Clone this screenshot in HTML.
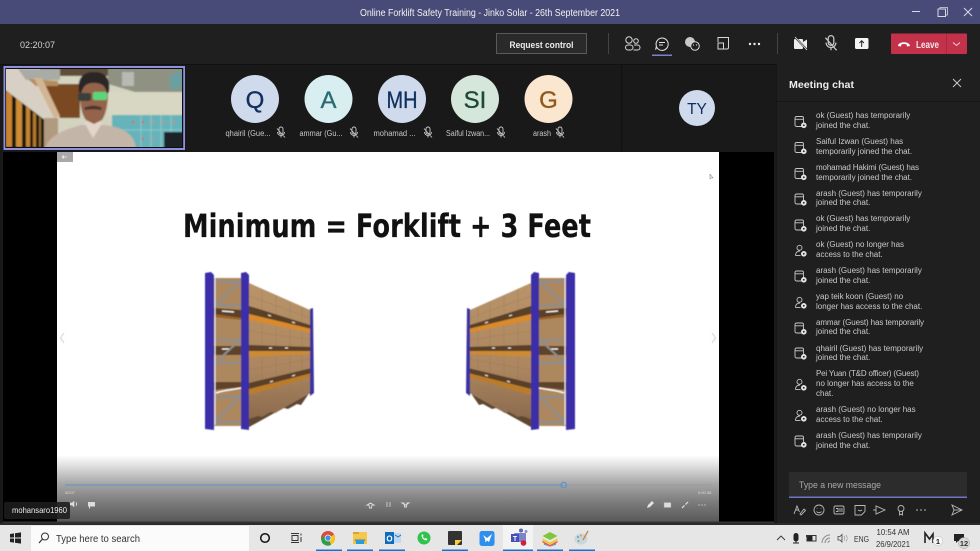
<!DOCTYPE html>
<html><head><meta charset="utf-8"><title>Online Forklift Safety Training</title>
<style>
html,body{margin:0;padding:0;background:#1f1f1f;width:980px;height:551px;overflow:hidden}
svg{display:block}
text{font-family:"Liberation Sans",sans-serif}
.c{font-size:8px;fill:#cacaca}
.n{font-size:8px;fill:#c8c8c8;text-anchor:middle}
.i{font-size:24px;text-anchor:middle;stroke-width:.35}
</style></head><body>
<svg xmlns="http://www.w3.org/2000/svg" width="980" height="551" viewBox="0 0 980 551">
<defs>
<filter id="b1" x="-5%" y="-5%" width="110%" height="110%"><feGaussianBlur stdDeviation="0.6"/></filter>
<filter id="b2" x="-5%" y="-5%" width="110%" height="110%"><feGaussianBlur stdDeviation="0.8"/></filter>
<linearGradient id="fade" x1="0" y1="0" x2="0" y2="1"><stop offset="0" stop-color="#fff"/><stop offset=".15" stop-color="#e2e2e2"/><stop offset=".42" stop-color="#a8a8a8"/><stop offset=".67" stop-color="#808080"/><stop offset="1" stop-color="#585858"/></linearGradient>
<linearGradient id="box" x1="0" y1="0" x2="0" y2="1"><stop offset="0" stop-color="#b99469"/><stop offset=".6" stop-color="#ab8660"/><stop offset="1" stop-color="#86654a"/></linearGradient>
<g id="mic"><path d="M-2 -4a2 2 0 0 1 4 0v3a2 2 0 0 1-4 0zM-3.500 -1a3.500 3.500 0 0 0 7 0M0 2.500v2M-4 -4.500L4 4.500" fill="none" stroke="#c8c8c8" stroke-width=".9"/></g>
<g id="j"><rect x="0" y="0" width="8.500" height="10" rx="1.500" fill="none" stroke="#c8c8c8" stroke-width=".9"/><path d="M0 2.800h8.500" stroke="#c8c8c8" stroke-width=".9"/><circle cx="8.800" cy="8.800" r="2.800" fill="#e4e4e4"/><circle cx="8.800" cy="8.800" r=".9" fill="#1f1f1f"/></g>
<g id="p"><circle cx="4.500" cy="2.800" r="2.500" fill="none" stroke="#c8c8c8" stroke-width=".9"/><path d="M.5 10.500c0-3 2-4.500 4.500-4.500" fill="none" stroke="#c8c8c8" stroke-width=".9"/><path d="M.5 10.500h5" stroke="#c8c8c8" stroke-width=".9"/><circle cx="8.800" cy="8.800" r="2.800" fill="#e4e4e4"/><circle cx="8.800" cy="8.800" r=".9" fill="#1f1f1f"/></g>
<g id="rack" filter="url(#b1)">
<!-- front bay -->
<polygon points="214,278 241,278 241,426 214,426" fill="#ad885e"/>
<polygon points="214,308 241,310 241,318 214,314" fill="#5a3f28"/>
<polygon points="214,346 241,346 241,355 214,355" fill="#5f4229"/>
<polygon points="214,382 241,382 241,387 214,390" fill="#5f4229"/>
<polygon points="214,314 241,318 241,320 214,317" fill="#9a6428"/>
<path d="M222 311l12 1M222 349h8M216 393c8-3 16-3 25-5" stroke="#fff" stroke-width="1.300" fill="none"/>
<!-- side face -->
<polygon points="249,283 310,310 312,392 249,427" fill="url(#box)"/>
<path d="M262 289v131M276 295v118M290 302v100M302 307v88" stroke="#967451" stroke-width=".6" opacity=".55"/>
<path d="M249 296l61 22M249 331l62 9M249 370l62-11M249 408l62-26" stroke="#967451" stroke-width=".6" opacity=".55"/>
<!-- pallet strips -->
<polygon points="249,306 310,325 310,329 249,314" fill="#5a3f28"/>
<polygon points="249,345 312,347 312,351 249,351" fill="#5a3f28"/>
<polygon points="249,383 312,368 312,373 249,389" fill="#5a3f28"/>
<path d="M268 315l3 1M292 322l3 1M269 348h3M285 348h3M270 382l3-1M292 376l3-1" stroke="#f2efe8" stroke-width="1"/>
<!-- orange beams -->
<polygon points="249,314 312,329 312,333 249,320" fill="#d98a2c"/>
<polygon points="249,351 312,351 312,354 249,357" fill="#cc8a34"/>
<polygon points="249,389 312,373 312,377 249,395" fill="#bb7c2c"/>
<!-- bottom pallet -->
<polygon points="249,419 258,416 262,417 271,412 275,413 284,408 288,409 297,404 301,405 312,389 312,392 249,427" fill="#5f4630"/>
<!-- bracing -->
<path d="M215 282h26M215 305h26M215 340h26M215 363h26M215 397h26M215 422h26M240 282l-25 23M240 340l-25 23M240 397l-25 25" stroke="#8a8e90" stroke-width="2" fill="none"/>
<path d="M215 275v150" stroke="#eee" stroke-width="1"/>
<!-- posts -->
<polygon points="205,273 211,272 214,275 214,430 205,429" fill="#3b2fa8"/>
<polygon points="241,273 246,272 249,275 249,430 241,429" fill="#3a2ea6"/>
<polygon points="310,309 313,308 314,393 310,396" fill="#3b30a0"/>
</g>
</defs>

<!-- base -->
<rect width="980" height="551" fill="#1f1f1f"/>
<rect width="980" height="24" fill="#484a78"/>
<text x="490" y="16" font-size="9.800" fill="#f2f2f2" text-anchor="middle" textLength="260" lengthAdjust="spacingAndGlyphs">Online Forklift Safety Training - Jinko Solar - 26th September 2021</text>
<path d="M912 11.500h8" stroke="#d8d8e4" stroke-width="1"/>
<rect x="938" y="9" width="7.500" height="7.500" fill="none" stroke="#d8d8e4"/><path d="M940 9v-1.500h7.500v7.500h-1.500" fill="none" stroke="#d8d8e4" stroke-width=".8"/>
<path d="M964 8l8 8M972 8l-8 8" stroke="#d8d8e4" stroke-width="1"/>

<!-- toolbar -->
<text x="20" y="48" font-size="9" fill="#d4d4d4">02:20:07</text>
<rect x="496.500" y="33.500" width="90" height="20" fill="#2a2a2a" stroke="#5a5a5a"/>
<text x="541.500" y="48" font-size="9" font-weight="bold" fill="#ececec" text-anchor="middle" textLength="64" lengthAdjust="spacingAndGlyphs">Request control</text>
<rect x="608" y="33" width="1" height="21" fill="#444"/>
<rect x="777" y="33" width="1" height="21" fill="#444"/>
<!-- people -->
<g style="fill:none;stroke:#d8d8d8;stroke-width:1"><circle cx="629" cy="40" r="3.200"/><circle cx="636" cy="41" r="2.300"/><rect x="625.500" y="45" width="7.500" height="5" rx="2.500"/><path d="M634 45h3.500a2 2 0 0 1 0 5h-4"/></g>
<!-- chat -->
<g style="stroke:#e4e4e4;stroke-width:1;fill:none"><path d="M662 38a6.200 6.200 0 1 1-5.500 9l-.9 2.700 .8-3.500A6.200 6.200 0 0 1 662 38z"/><path d="M659 42.500h6M659 45h4"/></g>
<rect x="652" y="54.500" width="20" height="1.500" fill="#7b7fd0"/>
<!-- react -->
<circle cx="690" cy="42" r="5" fill="#c8c8c8"/><circle cx="695" cy="46" r="4.300" fill="#1f1f1f" stroke="#d8d8d8"/><circle cx="693.500" cy="45" r=".6" fill="#ddd"/><circle cx="696.500" cy="45" r=".6" fill="#ddd"/>
<!-- rooms -->
<path d="M718 42v-4.500h10.500v10a1.500 1.500 0 0 1-1.500 1.500h-3" fill="none" stroke="#d8d8d8"/><rect x="718" y="43" width="5.500" height="6" fill="none" stroke="#d8d8d8"/>
<circle cx="750" cy="44" r="1.200" fill="#eee"/><circle cx="754.500" cy="44" r="1.200" fill="#eee"/><circle cx="759" cy="44" r="1.200" fill="#eee"/>
<!-- cam off -->
<rect x="794" y="39" width="9" height="10" rx="1" fill="#eee"/><path d="M803 42l4-2.500v9l-4-2.500z" fill="#eee"/><path d="M794 36l14 15" stroke="#1f1f1f" stroke-width="2"/><path d="M795 37l12 13" stroke="#eee" stroke-width=".8"/>
<!-- mic off -->
<g transform="translate(831 44) scale(1.400)"><use href="#mic"/></g>
<!-- share -->
<rect x="855" y="38" width="13.500" height="11" rx="1.500" fill="#f4f4f4"/><path d="M861.700 47v-6M859.500 43l2.200-2.300 2.200 2.300" fill="none" stroke="#222" stroke-width="1"/>
<!-- leave -->
<rect x="891" y="33.500" width="76" height="20.500" rx="1" fill="#c4314b"/>
<rect x="946" y="33.500" width="1" height="20.500" fill="#a82a41"/>
<path d="M898 46c0-5 12-5 12 0l-3 .5-.5-2c-1.500-.6-3.500-.6-5 0l-.5 2z" fill="#f6f6f6"/>
<text x="916" y="48" font-size="10" font-weight="bold" fill="#f4e6e8" textLength="23" lengthAdjust="spacingAndGlyphs">Leave</text>
<path d="M953 42.500l3.500 3 3.500-3" fill="none" stroke="#eed5da" stroke-width=".9"/>

<!-- stage -->
<rect x="0" y="64" width="776" height="461" fill="#191919"/>
<rect x="0" y="64" width="776" height="1" fill="#111"/>
<rect x="621" y="65" width="1.500" height="86" fill="#111"/>
<rect x="3" y="152" width="771" height="371" fill="#000"/>

<!-- video thumbnail -->
<rect x="3.500" y="66" width="181.500" height="84" fill="#8f8fe0"/>
<rect x="5.300" y="68" width="177.900" height="80" fill="#0d0d0d"/>
<svg x="6" y="69" width="176" height="78" viewBox="6 69 176 78">
<g filter="url(#b2)">
<rect x="0" y="60" width="190" height="95" fill="#d3d3c0"/>
<!-- left wall and ceiling -->
<polygon points="0,60 40,60 62,118 45,118 0,88" fill="#d8d0c4"/>
<rect x="40" y="60" width="70" height="16" fill="#5e4d38"/>
<polygon points="44,84 80,84 80,118 60,118" fill="#7a4a20"/>
<polygon points="18,69 60,69 60,80 26,80" fill="#a9aca4"/>
<polygon points="28,79 58,81 58,86 36,86" fill="#b58c5e"/>
<polygon points="34,78 42,78 60,116 54,118" fill="#d2b592"/>
<!-- right ceiling -->
<polygon points="108,60 190,60 190,92 135,92 108,84" fill="#8f9283"/>
<rect x="122" y="72" width="12" height="14" fill="#b7bab0"/>
<polygon points="170,76 182,70 182,88 170,90" fill="#6aa0a0"/>
<rect x="108" y="92" width="82" height="24" fill="#d8d7c3"/>
<!-- windows -->
<polygon points="0,86 46,121 46,155 0,155" fill="#141210"/>
<polygon points="6,91 12,95 12,147 6,147" fill="#c9842e"/>
<polygon points="16,98 22,103 22,147 16,147" fill="#cf8c34"/>
<polygon points="26,106 30,109 30,147 26,147" fill="#c88430"/>
<polygon points="33,112 36,114 36,147 33,147" fill="#b57a30"/>
<polygon points="39,116 41,118 41,147 39,147" fill="#966c30"/>
<rect x="44" y="118" width="14" height="32" fill="#b09a80"/>
<!-- lockers -->
<rect x="112" y="115" width="72" height="34" fill="#66b3b9"/>
<path d="M141 115v34M151 115v34M161 115v34M171 115v34M112 130h72" stroke="#96ced1" stroke-width=".8"/>
<circle cx="133" cy="122" r="1.300" fill="#c86a6a"/><circle cx="143" cy="122" r="1.300" fill="#c86a6a"/><circle cx="153" cy="122" r="1.300" fill="#c88"/><circle cx="163" cy="122" r="1.300" fill="#c88"/><circle cx="173" cy="122" r="1.300" fill="#c88"/><circle cx="143" cy="139" r="1.300" fill="#c66"/><circle cx="153" cy="139" r="1.300" fill="#c88"/>
<rect x="164" y="132" width="20" height="17" fill="#1d2225"/>
<!-- person -->
<path d="M45 149c3-13 18-19 36-24l24 0c14 2 30 7 31 24z" fill="#c4b5a9"/>
<path d="M84 122l9 16 10-16z" fill="#e4d5ca"/>
<path d="M80 94c-1-14 5-21 14-21s15 7 14 21c0 12-3 22-6 26l-8 4-8-4c-4-5-6-14-6-26z" fill="#94634a"/>
<path d="M79 92c-2-14 4-20 15-20s17 6 15 20l-2 2c-1-7-4-11-13-11s-11 4-13 11z" fill="#2c2628"/>
<rect x="78" y="93" width="13" height="8" rx="2" fill="#39403a"/>
<rect x="93" y="92" width="14" height="8" rx="2" fill="#58d87a"/>
<path d="M84 108c5-3 14-3 18 0l-1 2c-5-1-10-1-16 0z" fill="#46352f"/>
</g>
</svg>

<!-- avatars -->
<circle cx="255" cy="99" r="24" fill="#cfdaec"/><text x="255" y="108" class="i" fill="#11305f" stroke="#11305f">Q</text>
<circle cx="328.500" cy="99" r="24" fill="#d9eef0"/><text x="328.500" y="108" class="i" fill="#2a6c74" stroke="#2a6c74">A</text>
<circle cx="402" cy="99" r="24" fill="#cfdaec"/><text x="402" y="108" class="i" fill="#11305f" stroke="#11305f" textLength="31" lengthAdjust="spacingAndGlyphs">MH</text>
<circle cx="475" cy="99" r="24" fill="#d5e6da"/><text x="475" y="108" class="i" fill="#1c4a37" stroke="#1c4a37">SI</text>
<circle cx="548.500" cy="99" r="24" fill="#fbe6cf"/><text x="548.500" y="108" class="i" fill="#8f5a1e" stroke="#8f5a1e">G</text>
<circle cx="697" cy="108" r="18" fill="#cfdaec"/><text x="697" y="114" font-size="15.500" text-anchor="middle" fill="#11305f">TY</text>
<text x="248" y="136" class="n" textLength="45" lengthAdjust="spacingAndGlyphs">qhairil (Gue...</text><use href="#mic" x="281" y="133"/>
<text x="321" y="136" class="n" textLength="43" lengthAdjust="spacingAndGlyphs">ammar (Gu...</text><use href="#mic" x="354" y="133"/>
<text x="394.500" y="136" class="n" textLength="42" lengthAdjust="spacingAndGlyphs">mohamad ...</text><use href="#mic" x="428" y="133"/>
<text x="468" y="136" class="n" textLength="44" lengthAdjust="spacingAndGlyphs">Saiful Izwan...</text><use href="#mic" x="501" y="133"/>
<text x="542" y="136" class="n" textLength="18" lengthAdjust="spacingAndGlyphs">arash</text><use href="#mic" x="560" y="133"/>

<!-- slide -->
<rect x="57" y="152" width="662" height="370" fill="#fff"/>
<rect x="57" y="455" width="662" height="67" fill="url(#fade)"/>
<rect x="3" y="521.500" width="771" height="1.500" fill="#333"/>
<rect x="57" y="152" width="16" height="10" fill="#a9a9a9"/><path d="M62 157h5M62 157l2-1.500M62 157l2 1.500" stroke="#eee" stroke-width=".8"/>
<text x="183" y="237" font-size="32" font-weight="bold" fill="#111" stroke="#111" stroke-width=".2" textLength="408" lengthAdjust="spacingAndGlyphs" style='font-family:"DejaVu Sans","Liberation Sans",sans-serif'>Minimum = Forklift + 3 Feet</text>
<use href="#rack"/>
<use href="#rack" transform="translate(780 0) scale(-1 1)"/>
<path d="M64 333l-3.500 5 3.500 5" fill="none" stroke="#e0e0e0" stroke-width="1.500"/>
<path d="M712 333l3.500 5-3.500 5" fill="none" stroke="#e0e0e0" stroke-width="1.500"/>
<path d="M710 174v5l1.500-1.200 1.500.2z" fill="#fff" stroke="#666" stroke-width=".5"/>

<!-- player controls -->
<rect x="65" y="484.500" width="498" height="1" fill="#5f93c8"/>
<rect x="563" y="484.500" width="148" height="1" fill="#9a9a9a"/>
<circle cx="563.700" cy="485" r="2.800" fill="none" stroke="#5f93c8" stroke-width="1.200"/>
<text x="65" y="494" font-size="4" fill="#ddd">00:07</text>
<text x="698" y="494" font-size="4" fill="#ddd">0:00:38</text>
<path d="M70 503h2l2-2v6l-2-2h-2zM76 502c1 1 1 3 0 4" fill="#ddd" stroke="#ddd" stroke-width=".5"/>
<rect x="88" y="502" width="7" height="4.500" fill="#ddd"/><rect x="89" y="506.500" width="1" height="2" fill="#ddd"/>
<path d="M367 505l3.500-2 3.500 2h-2l-.5 3h-2l-.5-3z" fill="none" stroke="#ddd" stroke-width=".9"/>
<path d="M387 502v5M390 502v5" stroke="#bbb" stroke-width="1.200"/>
<path d="M402 503l3.500 2 3.500-2h-2l-.5 4h-2l-.5-4z" fill="none" stroke="#ddd" stroke-width=".9"/>
<path d="M647 508l1-3 4-4 2 2-4 4z" fill="#e4e4e4"/>
<rect x="664" y="502.500" width="7" height="5" fill="#ddd" stroke="#999" stroke-width=".4"/>
<path d="M682 508l2.500-2.500M688 502l-2.500 2.500" stroke="#e4e4e4" stroke-width="1.200"/>
<circle cx="699" cy="505" r=".6" fill="#ddd"/><circle cx="702" cy="505" r=".6" fill="#ddd"/><circle cx="705" cy="505" r=".6" fill="#ddd"/>
<rect x="4" y="502" width="66" height="17" rx="2" fill="#1c1c1c" opacity=".88"/>
<text x="12" y="513" font-size="8.500" fill="#eee" textLength="55" lengthAdjust="spacingAndGlyphs">mohansaro1960</text>

<!-- chat panel -->
<rect x="776" y="64" width="204" height="461" fill="#1f1f1f"/>
<rect x="776" y="64" width="1" height="461" fill="#151515"/>
<rect x="776" y="101" width="204" height="1" fill="#161616"/>
<text x="789" y="88" font-size="10" font-weight="bold" fill="#ededed" textLength="65" lengthAdjust="spacingAndGlyphs">Meeting chat</text>
<path d="M953 79l8 8M961 79l-8 8" stroke="#cfcfcf" stroke-width=".9"/>

<use href="#j" x="795" y="116.500"/>
<text x="816" y="118" class="c">ok (Guest) has temporarily</text><text x="816" y="128" class="c">joined the chat.</text>
<use href="#j" x="795" y="142.500"/>
<text x="816" y="144" class="c">Saiful Izwan (Guest) has</text><text x="816" y="154" class="c">temporarily joined the chat.</text>
<use href="#j" x="795" y="168.500"/>
<text x="816" y="170" class="c" textLength="103">mohamad Hakimi (Guest) has</text><text x="816" y="180" class="c">temporarily joined the chat.</text>
<use href="#j" x="795" y="194"/>
<text x="816" y="196" class="c">arash (Guest) has temporarily</text><text x="816" y="205" class="c">joined the chat.</text>
<use href="#j" x="795" y="220"/>
<text x="816" y="221" class="c">ok (Guest) has temporarily</text><text x="816" y="231" class="c">joined the chat.</text>
<use href="#p" x="795" y="245"/>
<text x="816" y="247" class="c">ok (Guest) no longer has</text><text x="816" y="257" class="c">access to the chat.</text>
<use href="#j" x="795" y="271"/>
<text x="816" y="273" class="c">arash (Guest) has temporarily</text><text x="816" y="283" class="c">joined the chat.</text>
<use href="#p" x="795" y="297"/>
<text x="816" y="299" class="c">yap teik koon (Guest) no</text><text x="816" y="309" class="c">longer has access to the chat.</text>
<use href="#j" x="795" y="323"/>
<text x="816" y="325" class="c" textLength="108">ammar (Guest) has temporarily</text><text x="816" y="334" class="c">joined the chat.</text>
<use href="#j" x="795" y="348"/>
<text x="816" y="351" class="c">qhairil (Guest) has temporarily</text><text x="816" y="360" class="c">joined the chat.</text>
<use href="#p" x="795" y="379"/>
<text x="816" y="376" class="c" textLength="103">Pei Yuan (T&amp;D officer) (Guest)</text><text x="816" y="386" class="c">no longer has access to the</text><text x="816" y="396" class="c">chat.</text>
<use href="#p" x="795" y="410"/>
<text x="816" y="412" class="c">arash (Guest) no longer has</text><text x="816" y="422" class="c">access to the chat.</text>
<use href="#j" x="795" y="436"/>
<text x="816" y="438" class="c">arash (Guest) has temporarily</text><text x="816" y="448" class="c">joined the chat.</text>

<rect x="789" y="472" width="178" height="26" rx="1.500" fill="#2c2c2c"/>
<rect x="789" y="496.500" width="178" height="1.500" fill="#7073c4"/>
<text x="799" y="488" font-size="9" fill="#a8a8a8" textLength="82" lengthAdjust="spacingAndGlyphs">Type a new message</text>
<!-- compose icons -->
<g fill="none" stroke="#b8b8b8" stroke-width=".9">
<path d="M794 514l3-8 2.500 6M796 510h3M800 514l4-5 1.500 1.500-4.500 4.500z"/>
<circle cx="819" cy="510" r="5"/><path d="M816.500 511.500c1.200 1.500 3.800 1.500 5 0M817 508.500v.5M821 508.500v.5"/>
<rect x="834" y="506" width="10" height="8" rx="1.500"/><path d="M836 508.500h2v3h-2M840 508v4M842 508v4"/>
<path d="M855 505.500h10v6l-3.500 3.500h-6.500z"/><path d="M858 510c1 1 3 1 4 0"/>
<path d="M876 506v8l9-4z"/><path d="M873 510h3"/>
<circle cx="901" cy="508.500" r="3"/><path d="M899.500 511v4l1.500-1 1.500 1v-4"/>
<path d="M952 505l10 5-10 5 2-5z"/><path d="M954 510h8"/>
</g>
<circle cx="917" cy="510" r=".8" fill="#c0c0c0"/><circle cx="921" cy="510" r=".8" fill="#c0c0c0"/><circle cx="925" cy="510" r=".8" fill="#c0c0c0"/>

<!-- taskbar -->
<rect x="0" y="525" width="980" height="26" fill="#e6e6e6"/>
<rect x="0" y="523" width="980" height="2" fill="#2b2b2b"/>
<path d="M10 534l4-.6v4.100h-4zM15 533.300l6-.9v5.100h-6zM10 538.500h4v4.100l-4-.6zM15 538.500h6v5.100l-6-.9z" fill="#222"/>
<rect x="31" y="526" width="218" height="25" fill="#fbfbfb"/>
<circle cx="45" cy="536.500" r="3.500" fill="none" stroke="#333" stroke-width="1"/><path d="M42.500 539l-3.500 4" stroke="#333" stroke-width="1.200"/>
<text x="56" y="542" font-size="10" fill="#333" textLength="84" lengthAdjust="spacingAndGlyphs">Type here to search</text>
<circle cx="265" cy="538" r="4.300" fill="none" stroke="#111" stroke-width="1.500"/>
<path d="M291 533.500h8M291 542.500h8" stroke="#333" stroke-width="1"/><rect x="292" y="535.500" width="6" height="5" fill="none" stroke="#333" stroke-width="1"/><path d="M301 533.500v2M301 537v5" stroke="#333" stroke-width="1"/>
<!-- chrome -->
<circle cx="328" cy="538" r="7" fill="#dd4b3a"/><path d="M328 538l6 -3.500a7 7 0 0 1-3 10z" fill="#f5c518"/><path d="M328 538l3 7a7 7 0 0 1-9.500-3.500l-0.500-5z" fill="#2f9e4a"/><circle cx="328" cy="538" r="3" fill="#4a8be8" stroke="#eee" stroke-width=".8"/>
<!-- folder -->
<rect x="353" y="532" width="14" height="12" fill="#f5c84a"/><rect x="353" y="532" width="6" height="2" fill="#d8a52c"/><rect x="353" y="538" width="14" height="6" fill="#f2c240"/><path d="M356 544v-3h8v3" fill="#2a9bd8"/><rect x="355" y="539.500" width="10" height="1.600" fill="#2a9bd8"/>
<!-- outlook -->
<rect x="390" y="533" width="11" height="10" fill="#bfd9f0"/><rect x="385" y="532" width="9" height="12" fill="#0f6cbd"/><text x="389.500" y="541.500" font-size="8" font-weight="bold" text-anchor="middle" fill="#fff">O</text><path d="M395 535l3 2 3-2" fill="none" stroke="#0f6cbd" stroke-width=".8"/>
<!-- whatsapp -->
<circle cx="424" cy="538" r="6.500" fill="#2fc34e"/><path d="M421.500 535c0 3 2 5 5 5.500l1-1.500-1.800-1-.8.700c-1-.4-1.600-1.100-2-2l.7-.8-1-1.800z" fill="#fff"/>
<!-- sticky -->
<rect x="448" y="531" width="14" height="14" rx="1" fill="#333"/><path d="M455 545v-5h7l-5 5z" fill="#f6d038"/>
<!-- kite -->
<rect x="479.500" y="531" width="15" height="15" rx="2.500" fill="#2e8ff0"/><path d="M483 535l4 3 5-4-3 8-2-1.500-1.500 2-.5-3.500z" fill="#fff"/>
<!-- teams -->
<rect x="503" y="525" width="30" height="26" fill="#f3f3f3"/>
<rect x="514" y="533" width="12" height="9" rx="1" fill="#7b83c9"/><circle cx="521" cy="530.500" r="2" fill="#6167ad"/><circle cx="526" cy="531.500" r="1.500" fill="#8c91d0"/>
<rect x="511" y="534" width="8" height="8" fill="#464eb8"/><text x="515" y="541" font-size="7" font-weight="bold" fill="#fff" text-anchor="middle">T</text>
<circle cx="523.500" cy="543" r="2.800" fill="#d01f3c"/>
<!-- bluestacks -->
<path d="M542.500 536l7.500-4 7.500 4-7.500 4z" fill="#7fc63f"/><path d="M542.500 538.500l7.500 4 7.500-4v2l-7.500 4-7.500-4z" fill="#f3c22a"/><path d="M542.500 541l7.500 4 7.500-4v1.500l-7.500 4-7.500-4z" fill="#e8502f"/><path d="M544 543.500l6 3.500 6-3.500v1l-6 2.500-6-2.500z" fill="#2d7bd6"/>
<!-- paint -->
<ellipse cx="581" cy="539" rx="6.500" ry="5.500" fill="#c9d6e0"/><circle cx="578" cy="537" r="1" fill="#5a9ad6"/><circle cx="581" cy="535.500" r="1" fill="#e0a03a"/><circle cx="578.500" cy="541" r="1" fill="#6bb56b"/><path d="M583 540l5-9" stroke="#c78e48" stroke-width="1.500"/>
<!-- underlines -->
<g fill="#0a78d7"><rect x="316" y="549.500" width="26" height="1.500"/><rect x="347" y="549.500" width="26" height="1.500"/><rect x="379" y="549.500" width="26" height="1.500"/><rect x="442" y="549.500" width="26" height="1.500"/><rect x="503" y="549.500" width="30" height="1.500"/><rect x="537" y="549.500" width="26" height="1.500"/><rect x="569" y="549.500" width="26" height="1.500"/></g>
<!-- tray -->
<path d="M777 540l4-4 4 4" fill="none" stroke="#333" stroke-width=".9"/>
<rect x="793.500" y="533" width="5" height="8.500" rx="2.500" fill="#222"/><path d="M793 543h6M796 541v2" stroke="#222"/>
<rect x="807" y="535.500" width="9" height="5.500" fill="none" stroke="#333"/><rect x="807.500" y="536" width="5" height="4.500" fill="#222"/><rect x="806" y="535" width="3" height="2" fill="#333"/>
<path d="M822 543a8 8 0 0 1 8-8M825 543a5 5 0 0 1 5-5M828 543a2 2 0 0 1 2-2" fill="none" stroke="#8a8a8a"/>
<path d="M838 536.500h2l2-2v7.500l-2-2h-2z" fill="none" stroke="#444" stroke-width=".8"/><path d="M844 536c1 1 1 3.500 0 4.500M846 535c1.500 2 1.500 4.500 0 6.500" fill="none" stroke="#999" stroke-width=".7"/>
<text x="854" y="542" font-size="8" fill="#333" textLength="15" lengthAdjust="spacingAndGlyphs">ENG</text>
<text x="893" y="535" font-size="8" fill="#333" text-anchor="middle" textLength="33" lengthAdjust="spacingAndGlyphs">10:54 AM</text>
<text x="893" y="547" font-size="8" fill="#333" text-anchor="middle" textLength="34" lengthAdjust="spacingAndGlyphs">26/9/2021</text>
<path d="M925 543v-10l4.500 6 3.500-5v9" fill="none" stroke="#222" stroke-width="1.600"/>
<circle cx="938" cy="541" r="4.800" fill="#f6f6f6" stroke="#bbb" stroke-width=".5"/><text x="938" y="544" font-size="7.500" font-weight="bold" fill="#222" text-anchor="middle">1</text>
<path d="M954 534h10v7h-6l-2 2v-2h-2z" fill="#222"/>
<circle cx="964" cy="543" r="5.500" fill="#d8d8d8" stroke="#999" stroke-width=".5"/><text x="964" y="546" font-size="7.500" font-weight="bold" fill="#333" text-anchor="middle">12</text>
</svg>
</body></html>
